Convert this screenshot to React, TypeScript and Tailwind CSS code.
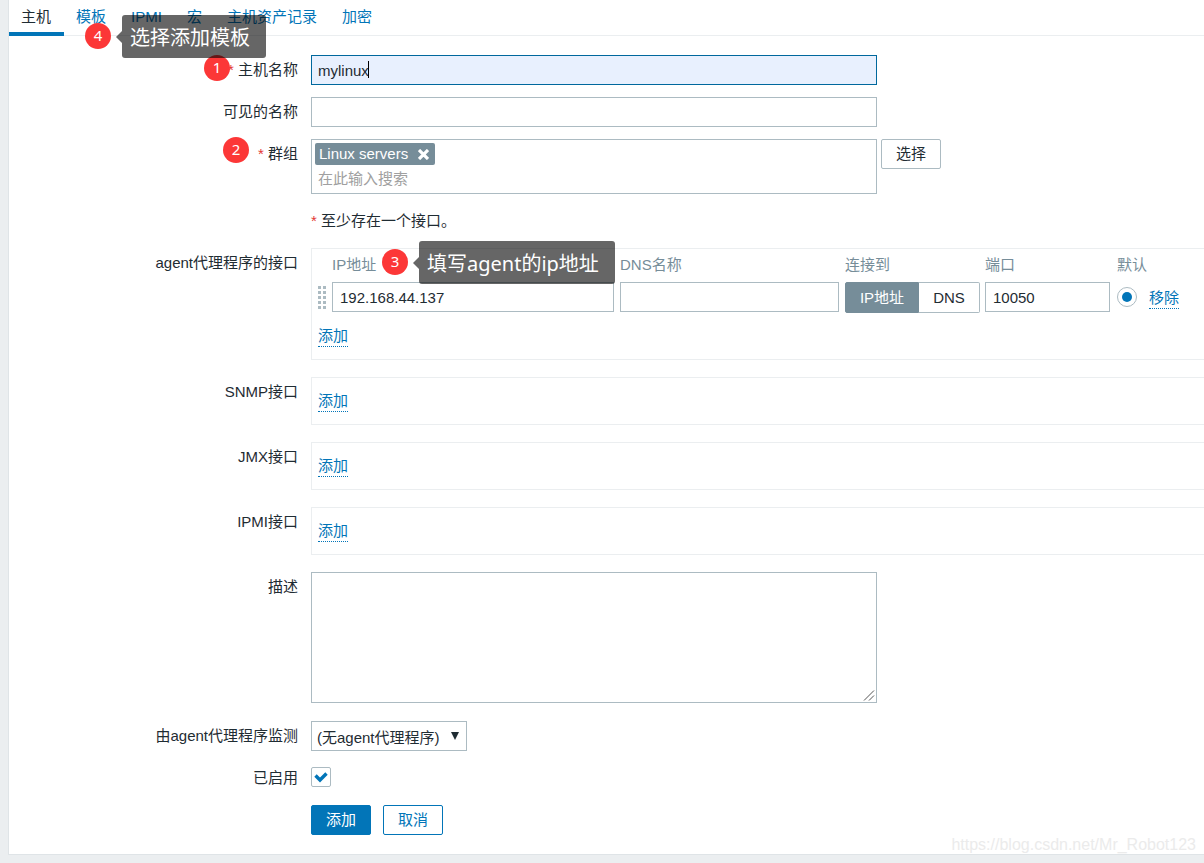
import type { ReactNode } from "react"

const tabs = ["主机", "模板", "IPMI", "宏", "主机资产记录", "加密"]

const fieldClass = "h-[30px] border border-[#acbbc2] bg-white px-[7px] text-[15px] text-[#1f2c33] outline-none"

function Star() {
  return <span className="text-[#e33734]">* </span>
}

function Row({
  label,
  htmlFor,
  required,
  children,
}: {
  label?: string
  htmlFor?: string
  required?: boolean
  children: ReactNode
}) {
  const text = (
    <>
      {required && <Star />}
      {label}
    </>
  )
  return (
    <div className="flex gap-[13px]">
      <div className="w-[289px] shrink-0 text-right leading-[30px]">
        {htmlFor ? <label htmlFor={htmlFor}>{text}</label> : <span>{text}</span>}
      </div>
      <div className="min-w-0 flex-1">{children}</div>
    </div>
  )
}

function AddLink({ children = "添加" }: { children?: ReactNode }) {
  return (
    <a href="#" className="inline-block h-[21px] border-b border-dotted border-[#0275b8] leading-5 text-[#0275b8]">
      {children}
    </a>
  )
}

function EmptyInterface({ label }: { label: string }) {
  return (
    <Row label={label}>
      <div className="mb-[5px] flex h-12 items-center border border-r-0 border-[#ebeef0] px-1.5">
        <AddLink />
      </div>
    </Row>
  )
}

function DragHandle() {
  return (
    <svg width="9" height="24" viewBox="0 0 9 24" fill="#acbbc2">
      {[0, 5, 10, 15, 20].map((y) => (
        <g key={y}>
          <rect x="1" y={y} width="3" height="3" />
          <rect x="6" y={y} width="3" height="3" />
        </g>
      ))}
    </svg>
  )
}

function AgentInterface() {
  return (
    <Row label="agent代理程序的接口">
      <div className="mb-[5px] h-28 border border-r-0 border-[#ebeef0] pl-[5px] pt-1">
        <table className="w-[870px] table-fixed text-left">
          <colgroup>
            <col className="w-[15px]" />
            <col className="w-[288px]" />
            <col className="w-[225px]" />
            <col className="w-[140px]" />
            <col className="w-[132px]" />
            <col className="w-8" />
            <col />
          </colgroup>
          <thead>
            <tr className="h-[29px] whitespace-nowrap align-top leading-6 text-[#768d99]">
              <th className="font-normal" />
              <th className="font-normal">IP地址</th>
              <th className="font-normal">DNS名称</th>
              <th className="font-normal">连接到</th>
              <th className="font-normal">端口</th>
              <th className="font-normal">默认</th>
              <th className="font-normal" />
            </tr>
          </thead>
          <tbody>
            <tr className="h-[31px] align-top">
              <td className="pt-1">
                <DragHandle />
              </td>
              <td>
                <input aria-label="IP地址" defaultValue="192.168.44.137" className={`${fieldClass} block w-[282px]`} />
              </td>
              <td>
                <input aria-label="DNS名称" className={`${fieldClass} block w-[219px]`} />
              </td>
              <td>
                <div className="relative flex h-[31px] w-[135px] text-center leading-[29px]">
                  <input type="radio" id="useip" name="useip" defaultChecked className="sr-only" />
                  <label
                    htmlFor="useip"
                    className="w-[74px] rounded-l-xs border border-[#768d99] bg-[#768d99] text-white"
                  >
                    IP地址
                  </label>
                  <input type="radio" id="usedns" name="useip" className="sr-only" />
                  <label htmlFor="usedns" className="flex-1 rounded-r-xs border border-l-0 border-[#acbbc2]">
                    DNS
                  </label>
                </div>
              </td>
              <td>
                <input aria-label="端口" defaultValue="10050" className={`${fieldClass} block w-[125px]`} />
              </td>
              <td className="pt-[5px]">
                <input
                  type="radio"
                  name="main"
                  aria-label="默认"
                  defaultChecked
                  className="grid size-5 appearance-none place-items-center rounded-full border border-[#acbbc2] bg-white before:size-2.5 before:rounded-full before:bg-[#0275b8]"
                />
              </td>
              <td className="pt-[5px]">
                <AddLink>移除</AddLink>
              </td>
            </tr>
          </tbody>
        </table>
        <div className="px-px pt-3">
          <AddLink />
        </div>
      </div>
    </Row>
  )
}

function Badge({ n, className }: { n: number; className: string }) {
  return (
    <span
      className={`absolute flex size-[26px] justify-center rounded-full bg-[#fc3737] font-['Noto_Sans'] text-[15px] leading-6 text-white ${className}`}
    >
      {n}
    </span>
  )
}

function Callout({ children, className }: { children: ReactNode; className: string }) {
  return (
    <div className={`absolute flex items-center ${className}`}>
      <svg width="6" height="12" viewBox="0 0 6 12">
        <path d="M6 0v12L0 6z" fill="#000" fillOpacity="0.6" />
      </svg>
      <div className="h-[43px] whitespace-nowrap rounded-[3px] bg-black/60 pl-2 pr-4 font-['Noto_Sans','Noto_Sans_CJK_SC',sans-serif] text-xl leading-[45px] text-white">
        {children}
      </div>
    </div>
  )
}

export default function App() {
  return (
    <div className="relative min-h-screen overflow-hidden bg-[#ebeef0] pl-2 font-['Liberation_Sans','Noto_Sans_CJK_SC',sans-serif] text-[15px] text-[#1f2c33]">
      <main className="border-b border-l border-[#dfe4e7] bg-white pb-[19px]">
        <nav className="flex h-9 border-b border-[#ebeef0]">
          {tabs.map((tab, i) => (
            <a
              key={tab}
              href="#"
              className={
                i === 0
                  ? "h-9 border-b-4 border-[#0275b8] pl-3 pr-[13px] leading-[33px]"
                  : "h-9 pl-3 pr-[13px] leading-[33px] text-[#0275b8]"
              }
            >
              {tab}
            </a>
          ))}
        </nav>

        <form className="flex flex-col gap-3 pt-[19px]">
          <Row label="主机名称" htmlFor="host" required>
            <div className="relative">
              <input
                id="host"
                defaultValue="mylinux"
                className="block h-[30px] w-[566px] border border-[#00689d] bg-[#e8f0fe] px-1.5 text-[15px] text-[#1f2c33] outline-none"
              />
              <span className="absolute left-[57px] top-1.5 h-[17px] w-px bg-black" />
            </div>
          </Row>
          <Row label="可见的名称" htmlFor="name">
            <input id="name" className={`${fieldClass} block w-[566px]`} />
          </Row>
          <Row label="群组" htmlFor="groups" required>
            <div className="flex items-start gap-1">
              <div className="h-[55px] w-[566px] border border-[#acbbc2] px-[3px] pt-[3px]">
                <span className="inline-flex h-[22px] items-center gap-2.5 rounded-xs bg-[#768d99] pl-1 pr-1.5 align-top text-white">
                  Linux servers
                  <button type="button" aria-label="移除">
                    <svg width="11" height="11" viewBox="0 0 11 11" stroke="#fff" strokeWidth="3.2">
                      <path d="M1 1l9 9M10 1l-9 9" />
                    </svg>
                  </button>
                </span>
                <input
                  id="groups"
                  placeholder="在此输入搜索"
                  className="block h-[26px] w-full px-[3px] text-[15px] outline-none placeholder:text-[#a0a0a0]"
                />
              </div>
              <button type="button" className="h-[30px] w-[60px] rounded-xs border border-[#acbbc2]">
                选择
              </button>
            </div>
          </Row>
          <Row>
            <p className="leading-[30px]">
              <Star />
              至少存在一个接口。
            </p>
          </Row>

          <AgentInterface />
          <EmptyInterface label="SNMP接口" />
          <EmptyInterface label="JMX接口" />
          <EmptyInterface label="IPMI接口" />

          <Row label="描述" htmlFor="description">
            <div className="relative mb-1.5 w-fit">
              <textarea
                id="description"
                className="block h-[131px] w-[566px] resize border border-[#acbbc2] px-[7px] py-1 outline-none"
              />
              <svg
                className="pointer-events-none absolute bottom-px right-px"
                width="14"
                height="14"
                viewBox="0 0 14 14"
              >
                <path d="M0 0h14v14H0z" fill="#fff" />
                <path d="M2 12.5L12 2.5M7 12.5L12 7.5" stroke="#555" />
              </svg>
            </div>
          </Row>
          <Row label="由agent代理程序监测" htmlFor="proxy">
            <div className="relative w-[156px]">
              <select
                id="proxy"
                className="block h-[30px] w-full appearance-none border border-[#acbbc2] bg-white pl-[5px] pt-1 text-[15px]"
              >
                <option>(无agent代理程序)</option>
              </select>
              <svg className="pointer-events-none absolute right-2 top-[11px]" width="8" height="8" viewBox="0 0 8 8">
                <path d="M0 0h8L4 8z" fill="#1f2c33" />
              </svg>
            </div>
          </Row>
          <Row label="已启用" htmlFor="status">
            <div className="flex h-[30px] items-start pt-1">
              <div className="relative size-5">
                <input
                  id="status"
                  type="checkbox"
                  defaultChecked
                  className="peer block size-5 appearance-none rounded-xs border border-[#acbbc2] bg-white"
                />
                <svg
                  className="pointer-events-none absolute left-[3px] top-[5px] hidden peer-checked:block"
                  width="14"
                  height="11"
                  viewBox="0 0 14 11"
                >
                  <path d="M1.5 3.5L6 8L12.5 1.5" fill="none" stroke="#0275b8" strokeWidth="3.4" />
                </svg>
              </div>
            </div>
          </Row>
          <Row>
            <div className="flex gap-3">
              <button type="submit" className="h-[30px] w-[60px] rounded-xs border border-[#0275b8] bg-[#0275b8] text-white">
                添加
              </button>
              <button type="button" className="h-[30px] w-[60px] rounded-xs border border-[#0275b8] text-[#0275b8]">
                取消
              </button>
            </div>
          </Row>
        </form>
      </main>

      <Badge n={1} className="left-[204px] top-[55px]" />
      <Badge n={2} className="left-[223px] top-[137px]" />
      <Badge n={3} className="left-[382px] top-[249px]" />
      <Badge n={4} className="left-[85px] top-[23px]" />
      <Callout className="left-[116px] top-[15px]">选择添加模板</Callout>
      <Callout className="left-[413px] top-[241px]">填写agent的ip地址</Callout>

      <span className="absolute bottom-2 right-2 text-base leading-5 text-[#ebebeb]">
        https://blog.csdn.net/Mr_Robot123
      </span>
    </div>
  )
}
